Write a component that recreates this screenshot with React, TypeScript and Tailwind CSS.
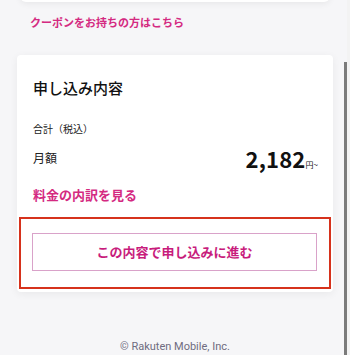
import React from 'react';

const font = { fontFamily: '"Noto Sans CJK JP", "Noto Sans", sans-serif' };

const App: React.FC = () => {
  return (
    <div className="relative w-[350px] h-[355px] overflow-hidden bg-[#f6f6f8]" style={font}>
      {/* end of previous card */}
      <div className="mx-[20px] -mt-[10px] h-[12px] rounded-b-[6px] bg-white shadow-[0_2px_6px_rgba(0,0,0,0.06)]" />

      <p className="mt-[12px] pl-[30px] text-[11px] leading-[16px] font-bold text-[#d42a81]">
        クーポンをお持ちの方はこちら
      </p>

      <section className="mx-[17px] mt-[25px] rounded-[4px] bg-white pt-[22px] pb-[3px] shadow-[0_2px_8px_rgba(0,0,0,0.06)]">
        <h2 className="px-[16px] text-[15px] leading-[22px] font-medium text-[#111]">申し込み内容</h2>

        <p className="mt-[23px] px-[16px] text-[10px] leading-[14px] text-[#222]">合計（税込）</p>

        <div className="mt-[8px] flex items-center justify-between pl-[16px] pr-[15px]">
          <span className="text-[12px] leading-[16px] text-[#222]">月額</span>
          <span className="flex items-baseline text-[#111]">
            <span className="text-[22px] leading-[28px] font-bold tracking-[0.2px]">2,182</span>
            <span className="text-[8px] leading-[10px]">円~</span>
          </span>
        </div>

        <p className="mt-[14px] px-[16px] text-[13px] leading-[18px] font-bold text-[#d42a81]">料金の内訳を見る</p>

        <div className="mx-[2px] mt-[13px] border-2 border-[#d6321c] pl-[11px] pr-[12px] pt-[14px] pb-[16px]">
          <button className="flex h-[38px] w-full items-center justify-center border border-[#d9a2c9] bg-white text-[13px] font-bold text-[#c81c7c]">
            この内容で申し込みに進む
          </button>
        </div>
      </section>

      <p className="mt-[48px] text-center text-[11px] leading-[14px] text-[#6f6c80]" style={{ fontFamily: '"Roboto", "Noto Sans", sans-serif' }}>
        © Rakuten Mobile, Inc.
      </p>

      {/* scrollbar edge */}
      <div className="absolute left-[344px] top-[62px] h-[300px] w-[2.5px] bg-[#7b7b7b]" />
      <div className="absolute left-[347px] top-0 h-full w-[3px] bg-[#f3f3f3]" />
    </div>
  );
};

export default App;
